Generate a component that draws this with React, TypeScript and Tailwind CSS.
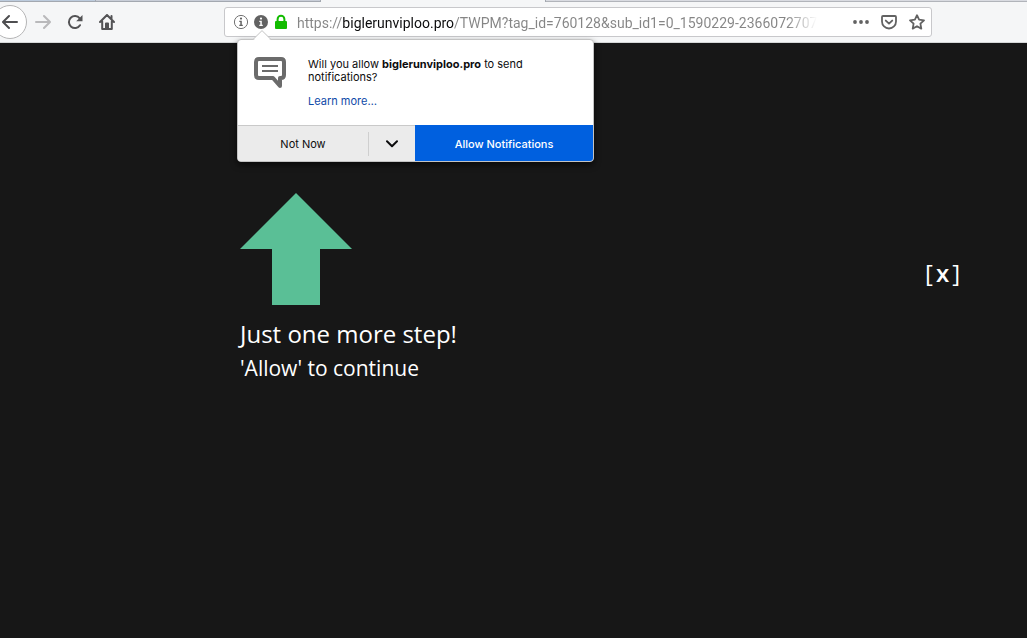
import React from 'react';

const TabStrip: React.FC = () => (
  <div className="flex h-[2px] w-full">
    <div className="w-24 border-b border-r border-[#a3a8b0] bg-[#bccbdd]" />
    <div className="w-[225px] border-b border-r border-[#a3a8b0] bg-[#c9ced8]" />
    <div className="w-[225px] border-r border-[#a3a8b0] bg-[#f5f6f7]" />
    <div className="flex-1 border-b border-[#b1b4ba] bg-[#d9dbe1]" />
  </div>
);

const InfoIcon: React.FC<{ filled?: boolean }> = ({ filled }) => (
  <svg viewBox="0 0 16 16" className="h-4 w-4" aria-hidden="true">
    <circle cx="8" cy="8" r={filled ? 7 : 6.6} fill={filled ? '#626262' : 'none'} stroke={filled ? 'none' : '#737373'} strokeWidth="1" />
    <g fill={filled ? '#fff' : '#626262'}>
      <circle cx="8" cy="4.6" r="1.1" />
      <path d="M6.3 6.7h2.5v4h1v1.2H6.3v-1.2h1V7.9h-1z" />
    </g>
  </svg>
);

const PermissionPopup: React.FC = () => (
  <div role="dialog" aria-label="Notification permission" className="absolute left-3 top-[31px] z-20 w-[357px]">
    {/* Arrow pointing at the info icon */}
    <svg viewBox="0 0 18 10" className="absolute -top-[9px] left-4 z-10 h-[10px] w-[18px]" aria-hidden="true">
      <path d="M0 9.5 9 .6l9 8.9" fill="#fff" stroke="#c3c3c3" />
      <path d="M1 10 9 2l8 8z" fill="#fff" />
    </svg>
    <div className="overflow-hidden rounded border border-[#c3c3c3] bg-white shadow-[0_3px_6px_rgba(0,0,0,0.6)]">
      <div className="flex h-[85px] gap-[22px] px-4 pt-[17px]">
        <svg viewBox="0 0 32 32" className="h-8 w-8 shrink-0" aria-hidden="true">
          <path
            d="M5 2h22q3 0 3 3v13q0 3-3 3h-1v8l-7-8H5q-3 0-3-3V5q0-3 3-3z"
            fill="none"
            stroke="#6b6b6b"
            strokeWidth="4"
            strokeLinejoin="round"
          />
          <path d="M8 9h16M8 14h16" stroke="#6b6b6b" strokeWidth="2" />
        </svg>
        <div className="pt-px text-[11px] leading-[13px] text-[#0c0c0d]">
          <p>
            Will you allow <b className="font-bold">biglerunviploo.pro</b> to send
            <br />
            notifications?
          </p>
          <a href="#learn-more" className="mt-[11px] block text-[#0f4aa8]">
            Learn more…
          </a>
        </div>
      </div>
      <div className="flex h-9 text-[11px]">
        <button type="button" className="w-[130px] border-t border-[#c9c9c9] bg-[#ebebeb] pt-px text-[#0c0c0d]">
          Not Now
        </button>
        <button
          type="button"
          aria-label="More options"
          className="flex w-[47px] items-center border-t border-[#c9c9c9] bg-[#ebebeb]"
        >
          <span className="h-6 w-px bg-[#cfcfcf]" />
          <svg viewBox="0 0 12 8" className="mx-auto h-2 w-3" aria-hidden="true">
            <path d="m1 1.2 5 5 5-5" fill="none" stroke="#0c0c0d" strokeWidth="2" strokeLinecap="round" strokeLinejoin="round" />
          </svg>
        </button>
        <button type="button" className="flex-1 bg-[#0060df] pt-0.5 font-medium text-white">
          Allow Notifications
        </button>
      </div>
    </div>
  </div>
);

const AddressBar: React.FC = () => (
  <div className="relative flex h-[30px] min-w-0 flex-1 items-center rounded-[3px] border border-[#c8c8cb] bg-white pl-2 pr-1.5">
    <div className="flex gap-1">
      <button type="button" aria-label="Site information">
        <InfoIcon />
      </button>
      <button type="button" aria-label="Permissions">
        <InfoIcon filled />
      </button>
      <svg viewBox="0 0 16 16" className="h-4 w-4" aria-hidden="true">
        <path d="M4.6 8V5.2a3.4 3.4 0 0 1 6.8 0V8" fill="none" stroke="#12bc00" strokeWidth="2" />
        <rect x="2" y="7" width="12" height="8" rx="1" fill="#12bc00" />
      </svg>
    </div>
    {/* Host name is dark, the rest is grey and fades out at the end */}
    <input
      type="text"
      aria-label="Address"
      defaultValue="https://biglerunviploo.pro/TWPM?tag_id=760128&sub_id1=0_1590229-23660727078"
      className="ml-2 w-[520px] min-w-0 bg-[linear-gradient(90deg,#858585_45px,#0c0c0d_45px,#0c0c0d_157px,#858585_157px,#858585_490px,transparent_520px)] bg-clip-text pt-px font-['Roboto',sans-serif] text-[14px] leading-5 text-transparent outline-none"
    />
    <div className="ml-auto flex items-center gap-3">
      <button type="button" aria-label="Page actions">
        <svg viewBox="0 0 16 16" className="h-4 w-4" fill="#626262" aria-hidden="true">
          <circle cx="2" cy="8" r="1.9" />
          <circle cx="8" cy="8" r="1.9" />
          <circle cx="14" cy="8" r="1.9" />
        </svg>
      </button>
      <button type="button" aria-label="Save to Pocket">
        <svg viewBox="0 0 16 16" className="h-4 w-4" fill="none" stroke="#626262" strokeLinecap="round" strokeLinejoin="round" aria-hidden="true">
          <path d="M2 2h12q1 0 1 1v4.5a7 7 0 0 1-14 0V3q0-1 1-1z" strokeWidth="1.8" />
          <path d="m4.8 6.6 3.2 3 3.2-3" strokeWidth="1.9" />
        </svg>
      </button>
      <button type="button" aria-label="Bookmark this page">
        <svg viewBox="0 0 16 16" className="h-4 w-4" aria-hidden="true">
          <path
            d="m8 1.2 2.1 4.5 4.9.6-3.6 3.4.9 4.9L8 12.2l-4.3 2.4.9-4.9L1 6.3l4.9-.6z"
            fill="none"
            stroke="#626262"
            strokeWidth="1.8"
            strokeLinejoin="round"
          />
        </svg>
      </button>
    </div>
    <PermissionPopup />
  </div>
);

const Toolbar: React.FC = () => (
  <nav aria-label="Browser" className="flex h-[41px] w-full items-center border-b border-[#d5d7d8] bg-[#f5f6f7] pr-[95px]">
    <div className="mr-[109px] flex shrink-0 items-center">
      <button
        type="button"
        aria-label="Back"
        className="-ml-[7px] flex h-[34px] w-[34px] items-center justify-center rounded-full border border-[#b5b5b6] bg-white"
      >
        <svg viewBox="0 0 16 16" className="h-4 w-4" fill="none" stroke="#4e4e50" strokeWidth="2" strokeLinecap="round" strokeLinejoin="round" aria-hidden="true">
          <path d="M15 8H1.5M7 2 1 8l6 6" />
        </svg>
      </button>
      <button type="button" aria-label="Forward" className="ml-2">
        <svg viewBox="0 0 16 16" className="h-4 w-4" fill="none" stroke="#b9b9bb" strokeWidth="2" strokeLinecap="round" strokeLinejoin="round" aria-hidden="true">
          <path d="M1 8h13.5M9 2l6 6-6 6" />
        </svg>
      </button>
      <button type="button" aria-label="Reload" className="ml-4">
        <svg viewBox="0 0 16 16" className="h-4 w-4" aria-hidden="true">
          <path d="M13 11.2A6 6 0 1 1 12.7 4.4" fill="none" stroke="#535355" strokeWidth="2" strokeLinecap="round" />
          <path d="M15.5 1v6.3H9.2z" fill="#535355" />
        </svg>
      </button>
      <button type="button" aria-label="Home" className="ml-4">
        <svg viewBox="0 0 16 16" className="h-4 w-4" fill="none" stroke="#535355" strokeWidth="2" strokeLinecap="round" strokeLinejoin="round" aria-hidden="true">
          <path d="m1 8 7-7 7 7M3.2 7.5V15h9.6V7.5M12.5 2v3" />
          <path d="M7 14.5v-5h2v5" />
        </svg>
      </button>
    </div>
    <AddressBar />
  </nav>
);

const App: React.FC = () => {
  return (
    <div className="flex min-h-screen flex-col bg-[#171717] font-['Inter',sans-serif]">
      <TabStrip />
      <Toolbar />
      <main className="flex flex-1 items-start justify-between pl-60 pr-[67px] pt-[150px] font-['Open_Sans',sans-serif] text-white">
        <section>
          <svg viewBox="0 0 112 112" className="h-28 w-28" aria-hidden="true">
            <path d="M56 0 112 56H80v56H32V56H0z" fill="#5abf96" />
          </svg>
          <h1 className="mt-3 text-2xl font-medium leading-[34px]">Just one more step!</h1>
          <p className="text-[21px] leading-[34px]">'Allow' to continue</p>
        </section>
        <button type="button" aria-label="Close" className="mt-16 flex gap-[3px] text-2xl leading-8">
          <span>[</span>
          <span className="font-semibold">x</span>
          <span>]</span>
        </button>
      </main>
    </div>
  );
};

export default App;
